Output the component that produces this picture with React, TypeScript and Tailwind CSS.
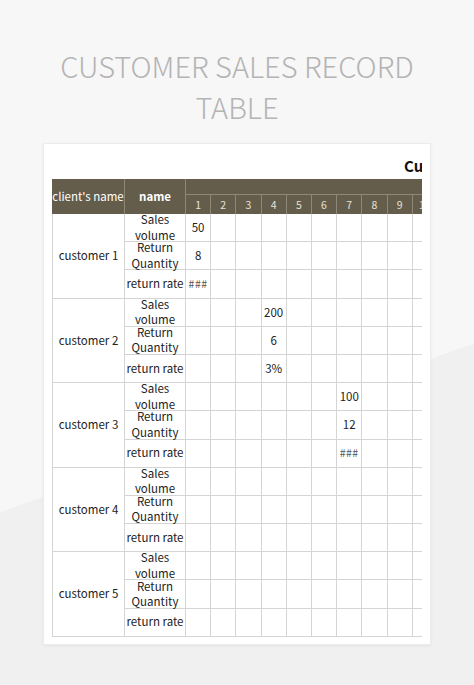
import React from 'react';

type Customer = {
  name: string;
  col: number | null;
  values: [string, string, string];
};

const customers: Customer[] = [
  { name: 'customer 1', col: 1, values: ['50', '8', '###'] },
  { name: 'customer 2', col: 4, values: ['200', '6', '3%'] },
  { name: 'customer 3', col: 7, values: ['100', '12', '###'] },
  { name: 'customer 4', col: null, values: ['', '', ''] },
  { name: 'customer 5', col: null, values: ['', '', ''] },
];

const metrics = ['Sales\nvolume', 'Return\nQuantity', 'return rate'];
const days = Array.from({ length: 12 }, (_, i) => i + 1);

const font = { fontFamily: '"Noto Sans CJK SC", "Noto Sans", sans-serif' };

const App: React.FC = () => {
  return (
    <div
      className="w-[474px] h-[685px] overflow-hidden bg-[linear-gradient(160.4deg,#f7f7f7_60%,#f0f0f0_60%)]"
      style={font}
    >
      {/* page heading */}
      <h1 className="pt-[45px] text-center text-[29px] leading-[41px] font-light text-[#b4b4b4]">
        CUSTOMER SALES RECORD
        <br />
        TABLE
      </h1>

      {/* sheet preview card */}
      <div className="mx-auto mt-[16px] w-[388px] bg-white border border-[#ececec] shadow-[0_1px_3px_rgba(0,0,0,0.06)] px-[8px] pt-[9px] pb-[7px]">
        <div className="overflow-hidden">
          <div className="h-[26px] pl-[352px] whitespace-nowrap text-[15px] leading-[26px] font-bold text-[#111]">
            Customer Sales Record Table
          </div>

          <div className="grid w-max grid-cols-[73px_61px_repeat(12,25.2px)] grid-rows-[16px_19px_repeat(15,28.2px)] text-[11.5px] text-[#222]">
            {/* header */}
            <div className="row-span-2 flex items-center justify-center bg-[#655d4b] border-r border-[#8f8877] text-white whitespace-nowrap">
              client's name
            </div>
            <div className="row-span-2 flex items-center justify-center bg-[#655d4b] border-r border-[#8f8877] text-white font-bold">
              name
            </div>
            <div className="col-span-12 bg-[#655d4b] border-b border-[#8f8877]" />
            {days.map((d) => (
              <div
                key={d}
                className="flex items-center justify-center bg-[#655d4b] border-r border-[#8f8877] text-[10.5px] text-[#e6e2d8]"
              >
                {d}
              </div>
            ))}

            {/* body */}
            {customers.map((c, ci) => (
              <React.Fragment key={c.name}>
                <div
                  className="flex items-center justify-center border-l border-r border-b border-[#d4d4d4]"
                  style={{ gridRow: `${3 + ci * 3} / span 3`, gridColumn: '1' }}
                >
                  {c.name}
                </div>
                {metrics.map((m, mi) => (
                  <React.Fragment key={m}>
                    <div
                      className="flex items-center justify-center text-center leading-[15.5px] border-r border-b border-[#d4d4d4] whitespace-pre"
                      style={{ gridRow: `${3 + ci * 3 + mi}`, gridColumn: '2' }}
                    >
                      {m}
                    </div>
                    {days.map((d) => {
                      const val = c.col === d ? c.values[mi] : '';
                      return (
                        <div
                          key={d}
                          className={`flex items-center justify-center border-r border-b border-[#d4d4d4] whitespace-nowrap ${
                            val === '###' ? 'text-[10.5px] tracking-[0.5px] text-[#555]' : ''
                          }`}
                          style={{ gridRow: `${3 + ci * 3 + mi}`, gridColumn: `${2 + d}` }}
                        >
                          {val}
                        </div>
                      );
                    })}
                  </React.Fragment>
                ))}
              </React.Fragment>
            ))}
          </div>
        </div>
      </div>
    </div>
  );
};

export default App;
